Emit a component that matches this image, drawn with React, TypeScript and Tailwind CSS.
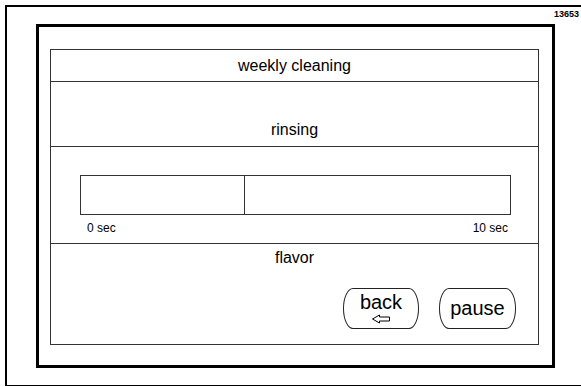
export default function App() {
  return (
    <div className="w-[581px] h-[387px] bg-white pt-[5px] pl-[5px] font-['Liberation_Sans',Arial,sans-serif] text-black">
      <div className="h-[381px] border-l-2 border-t-2 border-b border-black flex flex-col">
        {/* drawing number */}
        <div className="h-[17px] text-right pr-[2px] pt-[3px] text-[9px] font-bold leading-none">13653</div>

        {/* device screen */}
        <div className="ml-[29px] w-[519px] h-[344px] border-[3px] border-black pl-[11px] pt-[22px]">
          <div className="w-[489px] h-[296px] border border-[#333] flex flex-col">
            <div className="h-[32px] border-b border-[#333] flex items-center justify-center text-[16px] leading-[18px]">
              weekly cleaning
            </div>

            <div className="h-[65px] border-b border-[#333] flex items-end justify-center pb-[7px] text-[16px] leading-[18px]">
              rinsing
            </div>

            <div className="h-[97px] border-b border-[#333] pt-[28px]">
              <div className="ml-[29px] w-[431px] h-[40px] border border-[#333] flex">
                <div className="w-[164px] border-r border-[#333]" />
                <div className="flex-1" />
              </div>
              <div className="ml-[36px] w-[421px] mt-[7px] flex justify-between text-[12px] leading-[12px]">
                <span>0 sec</span>
                <span>10 sec</span>
              </div>
            </div>

            <div className="flex-1 flex flex-col">
              <div className="pt-[5px] text-center text-[16px] leading-[18px]">flavor</div>
              <div className="mt-[21px] flex justify-end gap-[20px] pr-[22px]">
                <button className="w-[76px] h-[41px] border border-[#222] rounded-[10px/50%] flex flex-col items-center justify-center text-[20px] leading-[19px]">
                  <span>back</span>
                  <svg width="20" height="10" viewBox="0 0 20 10" className="mt-[2px]">
                    <path d="M1.5 5 L8.5 1 L8.5 3 L18.5 3 L18.5 7 L8.5 7 L8.5 9 Z" fill="none" stroke="#000" strokeWidth="1" />
                  </svg>
                </button>
                <button className="w-[77px] h-[41px] border border-[#222] rounded-[10px/50%] flex items-center justify-center text-[20px] leading-[19px]">
                  pause
                </button>
              </div>
            </div>
          </div>
        </div>
      </div>
    </div>
  )
}
